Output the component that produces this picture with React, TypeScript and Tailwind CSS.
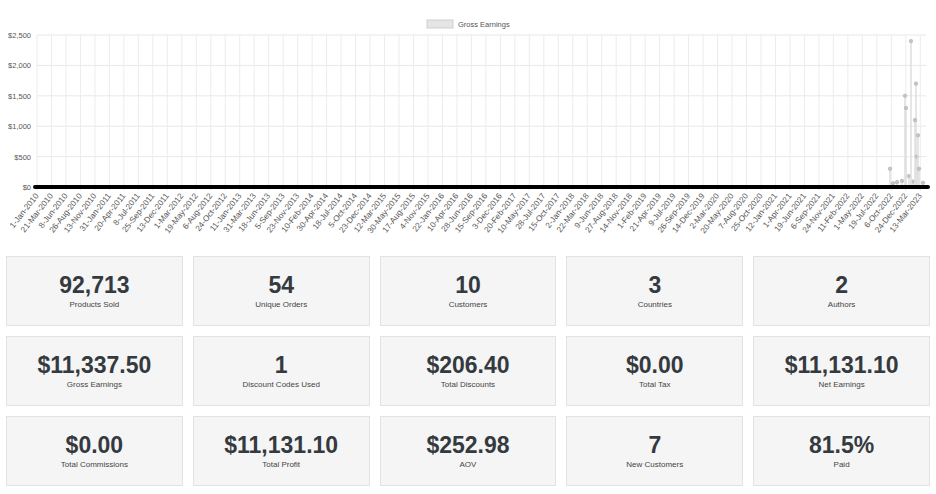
const months = ["Jan", "Feb", "Mar", "Apr", "May", "Jun", "Jul", "Aug", "Sep", "Oct", "Nov", "Dec"];
const labels: string[] = [];
for (let i = 0; i < 62; i++) {
  const d = new Date(Date.UTC(2010, 0, 1 + i * 79));
  labels.push(`${d.getUTCDate()}-${months[d.getUTCMonth()]}-${d.getUTCFullYear()}`);
}

const X0 = 37;
const STEP = 14.48;
const yOf = (v: number) => 187 - (v / 2500) * 152;

const spikes: [number, number][] = [
  [890, 300], [893, 60], [897, 80], [902, 100], [905, 1500], [906, 1300], [909, 180],
  [913, 90], [911, 2400], [916, 1700], [915, 1100], [917, 500], [918, 850], [919, 300], [923, 70],
];

const stats = [
  ["92,713", "Products Sold"], ["54", "Unique Orders"], ["10", "Customers"], ["3", "Countries"], ["2", "Authors"],
  ["$11,337.50", "Gross Earnings"], ["1", "Discount Codes Used"], ["$206.40", "Total Discounts"], ["$0.00", "Total Tax"], ["$11,131.10", "Net Earnings"],
  ["$0.00", "Total Commissions"], ["$11,131.10", "Total Profit"], ["$252.98", "AOV"], ["7", "New Customers"], ["81.5%", "Paid"],
];

function Chart() {
  const ticks = [0, 500, 1000, 1500, 2000, 2500];
  return (
    <svg width={936} height={250} className="block" style={{ fontFamily: "'Liberation Sans', Arial, sans-serif" }}>
      <rect x={427} y={20} width={26} height={8} fill="#e5e5e5" stroke="#cfcfcf" strokeWidth={1} />
      <text x={458} y={27} fontSize={7.5} fill="#555">Gross Earnings</text>
      {ticks.map((t) => (
        <g key={t}>
          <line x1={X0} x2={926} y1={yOf(t)} y2={yOf(t)} stroke="#e8e8e8" />
          <text x={31} y={yOf(t) + 3} fontSize={7.5} fill="#555" textAnchor="end">${t.toLocaleString("en-US")}</text>
        </g>
      ))}
      {labels.map((l, i) => {
        const x = X0 + i * STEP;
        return (
          <g key={l}>
            <line x1={x} x2={x} y1={35} y2={191} stroke="#ececec" />
            <text x={x + 2} y={196} fontSize={8.2} fill="#555" textAnchor="end" transform={`rotate(-52 ${x + 2} 196)`}>{l}</text>
          </g>
        );
      })}
      {spikes.map(([x, v], i) => (
        <g key={i}>
          <line x1={x} x2={x} y1={187} y2={yOf(v)} stroke="#dedede" strokeWidth={1.5} />
          <circle cx={x} cy={yOf(v)} r={1.8} fill="#c4c4c4" stroke="#aaa" strokeWidth={0.5} />
        </g>
      ))}
      <line x1={X0 - 2} x2={928} y1={187} y2={187} stroke="#000" strokeWidth={4} strokeLinecap="round" />
    </svg>
  );
}

export default function App() {
  return (
    <div className="w-[936px] h-[494px] bg-white overflow-hidden" style={{ fontFamily: "'Liberation Sans', Arial, sans-serif" }}>
      <Chart />
      <div className="grid grid-cols-5 gap-x-[10px] gap-y-[10px] px-[6px] mt-[6px]">
        {stats.map(([v, l], i) => (
          <div key={i} className="h-[70px] bg-[#f5f5f5] border border-[#e2e2e2] flex flex-col items-center justify-center">
            <div className="text-[23px] leading-[26px] font-bold text-[#343a40]">{v}</div>
            <div className="text-[8px] text-[#444] mt-[1px]">{l}</div>
          </div>
        ))}
      </div>
    </div>
  );
}
